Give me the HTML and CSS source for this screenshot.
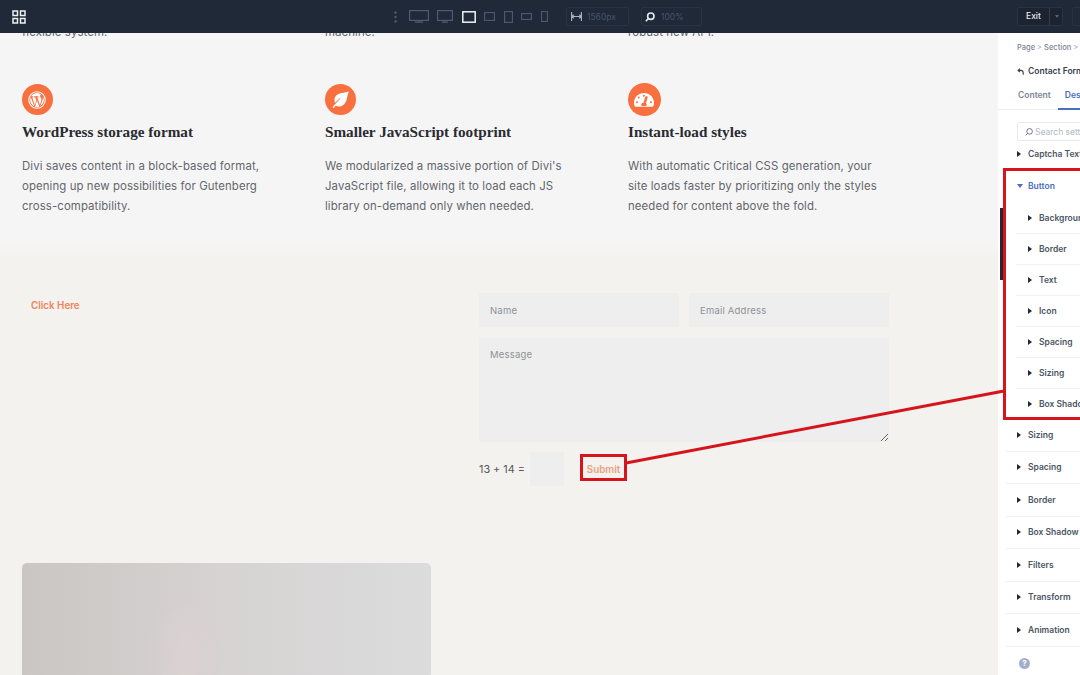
FILE: index.html
```html
<!DOCTYPE html>
<html lang="en">
<head>
    <meta charset="UTF-8">
    <title>Contact Form - Design</title>
    <link rel="stylesheet" href="styles.css">
</head>
<body>
    <div class="app">
        <div class="topbar">
            <svg class="grid-icon" width="14" height="14" viewBox="0 0 14 14" fill="none" stroke="#eef0f3" stroke-width="1.5">
                <rect x="1" y="1" width="4.5" height="4.5"/><rect x="8.5" y="1" width="4.5" height="4.5"/>
                <rect x="1" y="8.5" width="4.5" height="4.5"/><rect x="8.5" y="8.5" width="4.5" height="4.5"/>
            </svg>
            <div class="devices">
                <svg width="3" height="12" viewBox="0 0 3 12" fill="#4d5b76"><circle cx="1.5" cy="1.5" r="1.2"/><circle cx="1.5" cy="6" r="1.2"/><circle cx="1.5" cy="10.5" r="1.2"/></svg>
                <svg class="first" width="20" height="13" viewBox="0 0 20 13" fill="none" stroke="#4d5b76" stroke-width="1.2"><rect x=".6" y=".6" width="18.8" height="9.8"/><path d="M6 12.2h8M10 10.5v1.7"/></svg>
                <svg width="16" height="13" viewBox="0 0 16 13" fill="none" stroke="#4d5b76" stroke-width="1.2"><rect x=".6" y=".6" width="14.8" height="9.8"/><path d="M5 12.2h6M8 10.5v1.7"/></svg>
                <svg width="14" height="12" viewBox="0 0 14 12" fill="none" stroke="#f1f3f5" stroke-width="1.5"><rect x=".8" y=".8" width="12.4" height="10.4"/></svg>
                <svg width="11" height="9" viewBox="0 0 11 9" fill="none" stroke="#4d5b76" stroke-width="1.1"><rect x=".6" y=".6" width="9.8" height="7.8"/></svg>
                <svg width="9" height="12" viewBox="0 0 9 12" fill="none" stroke="#4d5b76" stroke-width="1.1"><rect x=".6" y=".6" width="7.8" height="10.8"/></svg>
                <svg width="11" height="7" viewBox="0 0 11 7" fill="none" stroke="#4d5b76" stroke-width="1.1"><rect x=".6" y=".6" width="9.8" height="5.8"/></svg>
                <svg width="7" height="11" viewBox="0 0 7 11" fill="none" stroke="#4d5b76" stroke-width="1.1"><rect x=".6" y=".6" width="5.8" height="9.8"/></svg>
            </div>
            <div class="bar-box width-box">
                <svg width="11" height="9" viewBox="0 0 11 9" fill="none" stroke="#aab4c6" stroke-width="1.1"><path d="M.6 0v9M10.4 0v9M1 4.5h9M2.8 2.6 1 4.5l1.8 1.9M8.2 2.6 10 4.5 8.2 6.4"/></svg>
                <span>1560px</span>
            </div>
            <div class="bar-box zoom-box">
                <svg width="10" height="10" viewBox="0 0 10 10" fill="none" stroke="#e5e8ed" stroke-width="1.6"><circle cx="5.8" cy="4.2" r="3.2"/><path d="M3.4 6.6.8 9.2"/></svg>
                <span>100%</span>
            </div>
            <div class="exit-box">
                <span class="exit-label">Exit</span>
                <span class="exit-caret"></span>
            </div>
            <div class="bar-box last-box"></div>
        </div>

        <div class="workspace">
            <div class="canvas">
                <div class="features">
                    <div class="feature cut">
                        <p>flexible system.</p>
                    </div>
                    <div class="feature cut">
                        <p>machine.</p>
                    </div>
                    <div class="feature cut">
                        <p>robust new API.</p>
                    </div>
                    <div class="feature">
                        <div class="feature-icon">
                            <svg width="20" height="20" viewBox="0 0 20 20"><circle cx="10" cy="10" r="8.2" fill="none" stroke="#fff" stroke-width="1.1"/><path fill="#fff" d="M3.2 10c0 2.8 1.6 5.1 4 6.2L3.8 7.2C3.4 8 3.2 9 3.2 10zm11.2-.3c0-.8-.3-1.4-.6-1.9-.4-.6-.7-1.100-.7-1.700 0-.7.5-1.300 1.200-1.300A6.800 6.800 0 0 0 4 6.300h1.900c.7 0 .8 1 .1 1.100l-.8.100 2.600 7.700 1.500-4.600-1.100-3.100-.7-.100c-.7 0-.6-1.100.100-1.100h3.400c.7 0 .8 1 .1 1.100l-.8.100 2.600 7.600.7-2.300c.3-1 .6-1.700.6-2.300zM10.100 10.700 8 16.800c.6.200 1.300.3 2 .3.800 0 1.600-.1 2.300-.4zM16 6.800c.5 1 .8 2.100.8 3.200 0 2.500-1.400 4.700-3.400 5.900l2.100-6c.4-1 .5-1.800.5-2.500z"/></svg>
                        </div>
                        <h3>WordPress storage format</h3>
                        <p>Divi saves content in a block-based format, opening up new possibilities for Gutenberg cross-compatibility.</p>
                    </div>
                    <div class="feature">
                        <div class="feature-icon">
                            <svg width="20" height="20" viewBox="0 0 20 20"><path fill="#fff" d="M18 1.500c-1 .8-2.600 1-4.300 1.200-3 .4-6.500 1-8.300 3.900-1.200 2-1.100 4.400-.4 6.100l5-4.700c.3-.3.700.1.400.4l-6.800 7.400c-.5.600-.9 1.200-1.100 1.700l1.500.6c.3-.8.900-1.700 1.500-2.400 1.800 1 4.600 1.200 6.700 0 3.200-1.800 4.300-4.800 4.900-8 .3-2 .8-3.800 1.300-4.800.3-.6.300-1 .1-1.400z"/></svg>
                        </div>
                        <h3>Smaller JavaScript footprint</h3>
                        <p>We modularized a massive portion of Divi's JavaScript file, allowing it to load each JS library on-demand only when needed.</p>
                    </div>
                    <div class="feature">
                        <div class="feature-icon">
                            <svg width="22" height="20" viewBox="0 0 22 20"><path fill="#fff" fill-rule="evenodd" d="M11 3C5.500 3 1 7.300 1 12.700c0 1.400.3 2.600.8 3.500.2.300.5.500.9.500h16.600c.4 0 .7-.2.900-.5.500-.9.800-2.100.8-3.500C21 7.300 16.500 3 11 3zm-.2 1.700a1 1 0 1 1 0 2 1 1 0 0 1 0-2zM5.700 6.500a1 1 0 1 1 0 2 1 1 0 0 1 0-2zM4 11.200a1 1 0 1 1 0 2 1 1 0 0 1 0-2zm14 0a1 1 0 1 1 0 2 1 1 0 0 1 0-2zM14 6.200c.5.100.8.500.7 1l-1.700 6a2 2 0 0 1 .3 2.800h-4.600a2 2 0 0 1 1.800-3.300l1.700-5.900c.2-.5.600-.7 1-.6z"/></svg>
                        </div>
                        <h3>Instant-load styles</h3>
                        <p>With automatic Critical CSS generation, your site loads faster by prioritizing only the styles needed for content above the fold.</p>
                    </div>
                </div>

                <div class="contact">
                    <a class="click-link" href="#">Click Here</a>
                    <form class="contact-form">
                        <div class="form-row">
                            <input class="field" type="text" placeholder="Name">
                            <input class="field" type="text" placeholder="Email Address">
                        </div>
                        <textarea class="field message" placeholder="Message"></textarea>
                        <div class="captcha-row">
                            <span class="captcha-text">13 + 14 =</span>
                            <input class="field captcha-input" type="text">
                            <button class="submit-btn" type="button">Submit</button>
                        </div>
                    </form>
                </div>

                <div class="photo"></div>
            </div>

            <div class="panel">
                <div class="breadcrumb">Page <i>&gt;</i> Section <i>&gt;</i> Row</div>
                <div class="module-title">
                    <svg width="7" height="7" viewBox="0 0 7 7" fill="none" stroke="#374151" stroke-width="1.100"><path d="M3 .6 1 2.400l2 1.800M1.200 2.400h2.600c1.500 0 2.400.9 2.400 2.400V6.800"/></svg>
                    <span>Contact Form</span>
                </div>
                <div class="tabs">
                    <span class="tab">Content</span>
                    <span class="tab active">Design</span>
                    <span class="tab">Advanced</span>
                </div>
                <div class="search-wrap">
                    <div class="search">
                        <svg width="8" height="8" viewBox="0 0 8 8" fill="none" stroke="#6b7280" stroke-width="1"><circle cx="4.600" cy="3.400" r="2.800"/><path d="M2.600 5.400.6 7.400"/></svg>
                        <span>Search settings</span>
                    </div>
                </div>
                <div class="options">
                    <div class="group cut-row"><span class="arrow"></span>Captcha Text</div>
                    <div class="group open"><span class="arrow"></span>Button</div>
                    <div class="sub">
                        <div class="sub-row"><span class="arrow"></span>Background</div>
                        <div class="sub-row"><span class="arrow"></span>Border</div>
                        <div class="sub-row"><span class="arrow"></span>Text</div>
                        <div class="sub-row"><span class="arrow"></span>Icon</div>
                        <div class="sub-row"><span class="arrow"></span>Spacing</div>
                        <div class="sub-row"><span class="arrow"></span>Sizing</div>
                        <div class="sub-row"><span class="arrow"></span>Box Shadow</div>
                    </div>
                    <div class="group"><span class="arrow"></span>Sizing</div>
                    <div class="group"><span class="arrow"></span>Spacing</div>
                    <div class="group"><span class="arrow"></span>Border</div>
                    <div class="group"><span class="arrow"></span>Box Shadow</div>
                    <div class="group"><span class="arrow"></span>Filters</div>
                    <div class="group"><span class="arrow"></span>Transform</div>
                    <div class="group"><span class="arrow"></span>Animation</div>
                </div>
                <div class="help">?</div>
            </div>
        </div>

        <!-- red annotation on top of the screenshot -->
        <div class="scroll-thumb"></div>
        <div class="mark-panel"></div>
        <div class="mark-submit"></div>
        <svg class="mark-line" width="1080" height="675" viewBox="0 0 1080 675"><path d="M626 463 1004 391" stroke="#d5141c" stroke-width="3" fill="none"/></svg>
    </div>
</body>
</html>
```

FILE: styles.css
```css
* {
    box-sizing: border-box;
}
html, body {
    margin: 0;
    padding: 0;
}
body {
    font-family: "Inter", "Liberation Sans", sans-serif;
    background-color: #f4f2ee;
}
.app {
    position: relative;
    width: 1080px;
    height: 675px;
    overflow: hidden;
    display: flex;
    flex-direction: column;
}

/* top bar */
.topbar {
    height: 33px;
    flex-shrink: 0;
    background-color: #1f2937;
    display: flex;
    align-items: center;
    padding-left: 12px;
    position: relative;
    z-index: 2;
}
.topbar > * {
    flex-shrink: 0;
}
.devices {
    display: flex;
    align-items: center;
    gap: 8.500px;
    margin-left: 368px;
    width: 160px;
}
.devices .first {
    margin-left: 3px;
}
.bar-box {
    height: 19px;
    border: 1px solid #283445;
    border-radius: 2px;
    display: flex;
    align-items: center;
    font-size: 8.500px;
    color: #46546e;
}
.width-box {
    width: 63px;
    margin-left: 12px;
    padding-left: 4px;
    gap: 5px;
}
.zoom-box {
    width: 61px;
    margin-left: 12px;
    padding-left: 3px;
    gap: 6px;
}
.exit-box {
    width: 46px;
    height: 19px;
    margin-left: 315px;
    border: 1px solid #283445;
    border-radius: 2px;
    display: flex;
    align-items: center;
    background-color: #1b2430;
}
.exit-label {
    width: 32px;
    padding-left: 8px;
    font-size: 8.500px;
    font-weight: 500;
    color: #e8eaee;
    border-right: 1px solid #323e50;
    line-height: 17px;
}
.exit-caret {
    margin-left: 5px;
    border-left: 2.500px solid transparent;
    border-right: 2.500px solid transparent;
    border-top: 3px solid #56627a;
}
.last-box {
    width: 30px;
    margin-left: 9px;
}

.workspace {
    flex: 1;
    display: flex;
    min-height: 0;
}

/* page canvas */
.canvas {
    width: 998px;
    flex-shrink: 0;
    overflow: hidden;
    background: linear-gradient(#f5f5f6 0, #f5f5f6 211px, #f4f2ee 226px);
}
.features {
    height: 232px;
    margin-top: -12px;
    padding-left: 22px;
    display: grid;
    grid-template-columns: repeat(3, 303px);
    grid-template-rows: 22px auto;
    row-gap: 41px;
}
.feature p {
    width: 255px;
    margin: 0;
    font-size: 11.400px;
    line-height: 20px;
    letter-spacing: .1px;
    color: #63666b;
}
.feature.cut p {
    line-height: 22px;
}
.feature-icon {
    width: 31px;
    height: 31px;
    margin-left: -.5px;
    border-radius: 50%;
    background-color: #f8703f;
    display: flex;
    align-items: center;
    justify-content: center;
}
.feature:nth-child(6) .feature-icon {
    width: 33px;
    height: 33px;
    margin-top: -1px;
    margin-bottom: -1px;
}
.feature h3 {
    margin: 7px 0 14px;
    font-family: "Liberation Serif", serif;
    font-size: 15.200px;
    line-height: 20px;
    font-weight: 700;
    color: #2a2b30;
}

.contact {
    padding: 40px 0 0 31px;
    display: flex;
}
.click-link {
    width: 448px;
    font-size: 9.800px;
    line-height: 25px;
    font-weight: 600;
    color: #f3825a;
    text-decoration: none;
}
.contact-form {
    width: 410px;
}
.form-row {
    display: flex;
    justify-content: space-between;
}
.field {
    border: none;
    outline: none;
    background-color: #eeeeee;
    border-radius: 0;
    padding: 0 11px;
    font-family: "Inter", "Liberation Sans", sans-serif;
    font-size: 9.500px;
    letter-spacing: .2px;
    color: #777;
    width: 200px;
    height: 34px;
    display: block;
}
.field::placeholder {
    color: #8f9194;
    opacity: 1;
}
.message {
    width: 410px;
    height: 104px;
    margin-top: 11px;
    padding-top: 11px;
}
.captcha-row {
    display: flex;
    align-items: center;
    margin-top: 10px;
}
.captcha-text {
    width: 51px;
    font-size: 10.800px;
    color: #55585c;
}
.captcha-input {
    width: 34px;
}
.submit-btn {
    margin-left: 16px;
    width: 47px;
    height: 27px;
    padding: 0;
    border: none;
    background: none;
    font-family: "Inter", "Liberation Sans", sans-serif;
    font-size: 9.800px;
    font-weight: 600;
    color: #e9a182;
}
.photo {
    width: 409px;
    height: 130px;
    margin: 77px 0 0 22px;
    border-radius: 5px 5px 0 0;
    background:
        radial-gradient(ellipse 40px 75px at 165px 95px, #dcd1d2, rgba(220, 209, 210, 0)),
        linear-gradient(90deg, #c9c6c4, #d6d3d2 50%, #dcdcdd);
}

/* settings panel */
.panel {
    flex: 1;
    min-width: 0;
    background-color: #fff;
    overflow: hidden;
    position: relative;
    font-size: 8.500px;
    color: #4b5563;
}
.panel > * {
    width: 300px;
}
.breadcrumb {
    padding: 10px 0 0 19px;
    height: 25px;
    font-size: 7.500px;
    font-weight: 500;
    color: #7b8494;
    line-height: 10px;
}
.breadcrumb i {
    font-style: normal;
    margin: 0;
    color: #a5acb8;
}
.module-title {
    height: 26px;
    padding-left: 19px;
    display: flex;
    align-items: center;
    gap: 4px;
    font-weight: 600;
    color: #374151;
}
.tabs {
    height: 26px;
    padding-left: 13px;
    border-bottom: 1px solid #eceef1;
    display: flex;
}
.tab {
    padding: 0 7px;
    line-height: 22px;
    height: 26px;
    font-weight: 600;
    color: #7c8695;
}
.tab.active {
    color: #4a6ec0;
    border-bottom: 2px solid #4a6ec0;
}
.search-wrap {
    height: 40px;
    padding: 12px 0 0 19px;
}
.search {
    height: 19px;
    width: 200px;
    border: 1px solid #e8eaed;
    border-radius: 2px;
    display: flex;
    align-items: center;
    gap: 2px;
    padding-left: 7px;
    font-size: 8.500px;
    color: #b2b8c2;
}
.options {
    height: 497px;
    overflow: hidden;
}
.group {
    height: 32.500px;
    display: flex;
    align-items: center;
    gap: 6px;
    font-weight: 600;
    color: #4b5563;
    border-bottom: 1px solid #f0f1f3;
    margin-left: 7px;
    padding-left: 12px;
}
.cut-row {
    height: 17px;
    margin-top: -5px;
    margin-bottom: 8px;
    border-bottom: none;
}
.group.open {
    color: #4a6ec0;
    border-bottom: none;
}
.group.open .arrow {
    border-left: 3px solid transparent;
    border-right: 3px solid transparent;
    border-top: 4px solid #4a6ec0;
    border-bottom: none;
    margin-right: -1px;
}
.arrow {
    width: 0;
    height: 0;
    border-top: 3px solid transparent;
    border-bottom: 3px solid transparent;
    border-left: 4px solid #1f2937;
    flex-shrink: 0;
    margin-right: 1px;
}
.sub {
    padding-left: 18px;
}
.sub-row {
    height: 31.100px;
    display: flex;
    align-items: center;
    gap: 6px;
    padding-left: 12px;
    font-weight: 600;
    color: #4b5563;
    border-bottom: 1px solid #f0f1f3;
}
.sub-row:last-child {
    border-bottom: none;
    height: 30.100px;
}
.help {
    position: absolute;
    left: 21px;
    top: 625px;
    width: 11px;
    height: 11px;
    border-radius: 50%;
    background-color: #a3aecb;
    color: #fff;
    font-size: 8px;
    font-weight: 700;
    line-height: 11px;
    text-align: center;
}

/* annotation marks */
.scroll-thumb {
    position: absolute;
    left: 1000px;
    top: 208px;
    width: 4px;
    height: 72px;
    background-color: #2a2730;
}
.mark-panel {
    position: absolute;
    left: 1003px;
    top: 168px;
    width: 100px;
    height: 252px;
    border: 3px solid #d5141c;
}
.mark-submit {
    position: absolute;
    left: 580px;
    top: 454px;
    width: 47px;
    height: 27px;
    border: 3px solid #d5141c;
}
.mark-line {
    position: absolute;
    left: 0;
    top: 0;
    pointer-events: none;
}
```
